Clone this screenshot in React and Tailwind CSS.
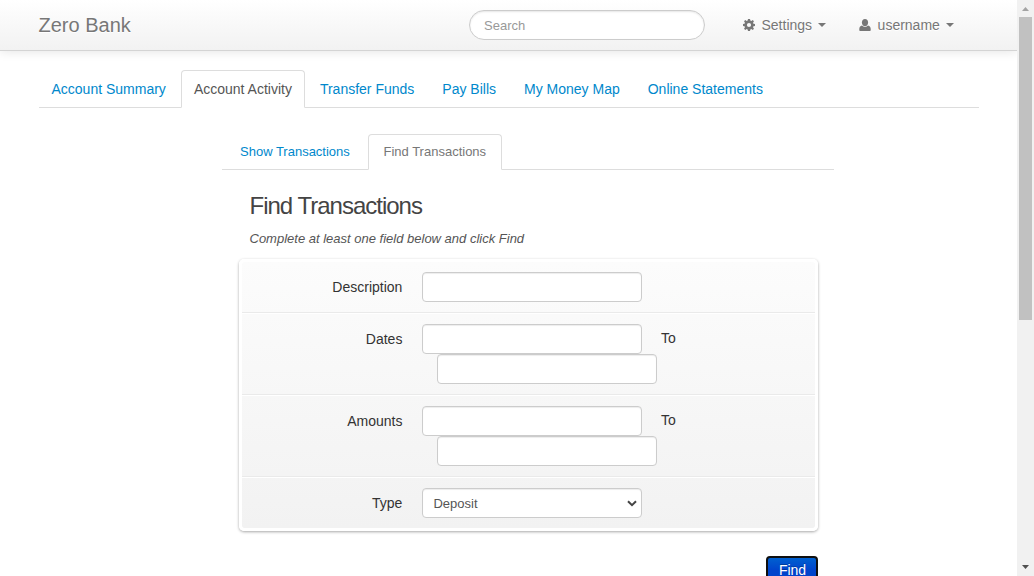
import React from "react";

const NAV_TABS = [
  "Account Summary",
  "Account Activity",
  "Transfer Funds",
  "Pay Bills",
  "My Money Map",
  "Online Statements",
];

const inputBase =
  "block h-[30px] w-[220px] rounded-[4px] border border-[#ccc] bg-white shadow-[inset_0_1px_1px_rgba(0,0,0,0.075)] outline-none";

function GearIcon() {
  return (
    <svg width="12" height="12" viewBox="0 0 12 12" className="block" fill="#777">
      <path
        fillRule="evenodd"
        d="M5 0h2l.35 1.6 1 .42L9.75 1.1l1.2 1.2-.9 1.35.4 1L12 5v2l-1.55.35-.4 1 .9 1.35-1.2 1.2-1.4-.9-1 .4L7 12H5l-.35-1.6-1-.4-1.4.9-1.2-1.2.9-1.35-.4-1L0 7V5l1.55-.35.4-1-.9-1.35 1.2-1.2 1.4.92 1-.42zM6 3.9a2.1 2.1 0 1 0 0 4.2 2.1 2.1 0 0 0 0-4.2z"
      />
    </svg>
  );
}

function UserIcon() {
  return (
    <svg width="12" height="12" viewBox="0 0 12 12" className="block" fill="#777">
      <path d="M6 0C4.100 0 2.900 1.400 2.900 3.400S4.300 7.200 6 7.200s3.100-1.800 3.100-3.800S7.900 0 6 0z" />
      <path d="M3 6.600C1.200 7 .3 8.200.3 10v1.200c0 .5.300.8.800.8h9.800c.5 0 .8-.3.800-.8V10c0-1.800-.9-3-2.700-3.400C8.200 7.500 7.200 8 6 8s-2.200-.5-3-1.400z" />
    </svg>
  );
}

function Caret() {
  return (
    <span className="block h-0 w-0 border-x-4 border-t-4 border-x-transparent border-t-[#777]" />
  );
}

function Header() {
  return (
    <header className="relative flex h-[51px] items-center border-b border-[#d4d4d4] bg-linear-to-b from-white to-[#f2f2f2] pl-[38.5px] text-[#777] shadow-[0_1px_10px_rgba(0,0,0,0.1)] [text-shadow:0_1px_0_#fff]">
      <span className="w-[430.5px] text-[20px] leading-5">Zero Bank</span>
      <input
        placeholder="Search"
        className="h-[30px] w-[236px] rounded-[15px] border border-[#ccc] bg-white px-[14px] text-[13px] shadow-[inset_0_1px_2px_rgba(0,0,0,0.1)] outline-none placeholder:text-[#999]"
      />
      <div className="ml-[38px] flex items-center text-[14px] leading-5">
        <GearIcon />
        <span className="ml-[6.5px] mr-[5.5px]">Settings</span>
        <Caret />
      </div>
      <div className="ml-[33px] flex items-center text-[14px] leading-5">
        <UserIcon />
        <span className="ml-[7px] mr-[6px]">username</span>
        <Caret />
      </div>
    </header>
  );
}

function MainTabs() {
  return (
    <nav className="ml-[38.5px] mt-[19px] flex h-[38px] w-[940px] gap-[2px] border-b border-[#ddd] text-[14px] leading-5">
      {NAV_TABS.map((tab) => (
        <a
          key={tab}
          className={
            tab === "Account Activity"
              ? "h-[38px] rounded-t-[4px] border border-[#ddd] border-b-white bg-white px-3 py-2 text-[#555]"
              : "px-[13px] py-[9px] text-[#08c]"
          }
        >
          {tab}
        </a>
      ))}
    </nav>
  );
}

function SubTabs() {
  return (
    <nav className="flex h-[36px] border-b border-[#ddd] text-[13px] leading-[18px]">
      <a className="w-[146px] pl-[18px] pt-[9px] text-[#08c]">Show Transactions</a>
      <a className="h-[36px] w-[134px] rounded-t-[4px] border border-[#ddd] border-b-white bg-white pl-[14.5px] pt-2 text-[#777]">
        Find Transactions
      </a>
    </nav>
  );
}

function Row({ label, range, first, last, children }) {
  return (
    <div
      className={`flex pb-[10px] ${first ? "pt-[10px]" : "border-t border-white pt-[10px]"} ${
        last ? "" : "border-b border-b-[#eaeaea]"
      }`}
    >
      <label className="w-[160.4px] pt-[5px] text-right text-[14px] leading-5">{label}</label>
      <div className="ml-[19.6px]">
        {children || <input className={inputBase} />}
        {range && <input className={`${inputBase} ml-[15px]`} />}
      </div>
      {range && <span className="ml-1 pt-1 text-[14px] leading-5">To</span>}
    </div>
  );
}

function TransactionForm() {
  return (
    <form className="ml-[17px] mt-[11px] w-[579px] rounded-[5px] border-[3px] border-white bg-linear-to-b from-[#fcfcfc] to-[#f2f2f2] bg-clip-padding shadow-[0_1px_3px_rgba(0,0,0,0.35)]">
      <Row label="Description" first />
      <Row label="Dates" range />
      <Row label="Amounts" range />
      <Row label="Type" last>
        <div className={`${inputBase} flex items-center justify-between pl-[10.5px] pr-1 pt-[1px] text-[13px] text-[#555]`}>
          <span>Deposit</span>
          <svg width="10" height="7" viewBox="0 0 10 7" fill="none" stroke="#444" strokeWidth="2">
            <path d="M1 1.200L5 5.200l4-4" />
          </svg>
        </div>
      </Row>
    </form>
  );
}

function Scrollbar() {
  return (
    <aside className="flex h-[576px] w-[17px] flex-col items-center bg-[#f1f1f1]">
      <svg width="17" height="17" viewBox="0 0 17 17" fill="#a3a3a3">
        <path d="M5 11h7L8.500 7z" />
      </svg>
      <div className="h-[303px] w-[13px] bg-[#c1c1c1]" />
      <svg width="17" height="17" viewBox="0 0 17 17" fill="#505050" className="mt-auto">
        <path d="M5 6h7L8.500 10z" />
      </svg>
    </aside>
  );
}

export default function App() {
  return (
    <div className="flex h-[576px] w-[1034px] overflow-hidden bg-white font-['Liberation_Sans',Arial,sans-serif] text-[#333]">
      <div className="h-[576px] w-[1017px] overflow-hidden">
        <Header />
        <MainTabs />
        <main className="ml-[222px] mt-[26px] w-[612px]">
          <SubTabs />
          <h2 className="ml-[27.5px] mt-[18px] text-[24px] leading-9 tracking-[-1px] text-[#444]">
            Find Transactions
          </h2>
          <p className="ml-[27.5px] mt-[6px] text-[13px] italic leading-[18px] text-[#555]">
            Complete at least one field below and click Find
          </p>
          <TransactionForm />
          <div className="flex w-[596px] justify-end pt-[25px]">
            <button className="h-[30px] w-[52px] rounded-[4px] border-2 border-[#101010] bg-linear-to-b from-[#0060d0] via-[#0044cc] via-45% to-[#0044cc] pb-[2px] pl-[1px] text-[14px] leading-5 text-white [text-shadow:0_-1px_0_rgba(0,0,0,0.25)]">
              Find
            </button>
          </div>
        </main>
      </div>
      <Scrollbar />
    </div>
  );
}
